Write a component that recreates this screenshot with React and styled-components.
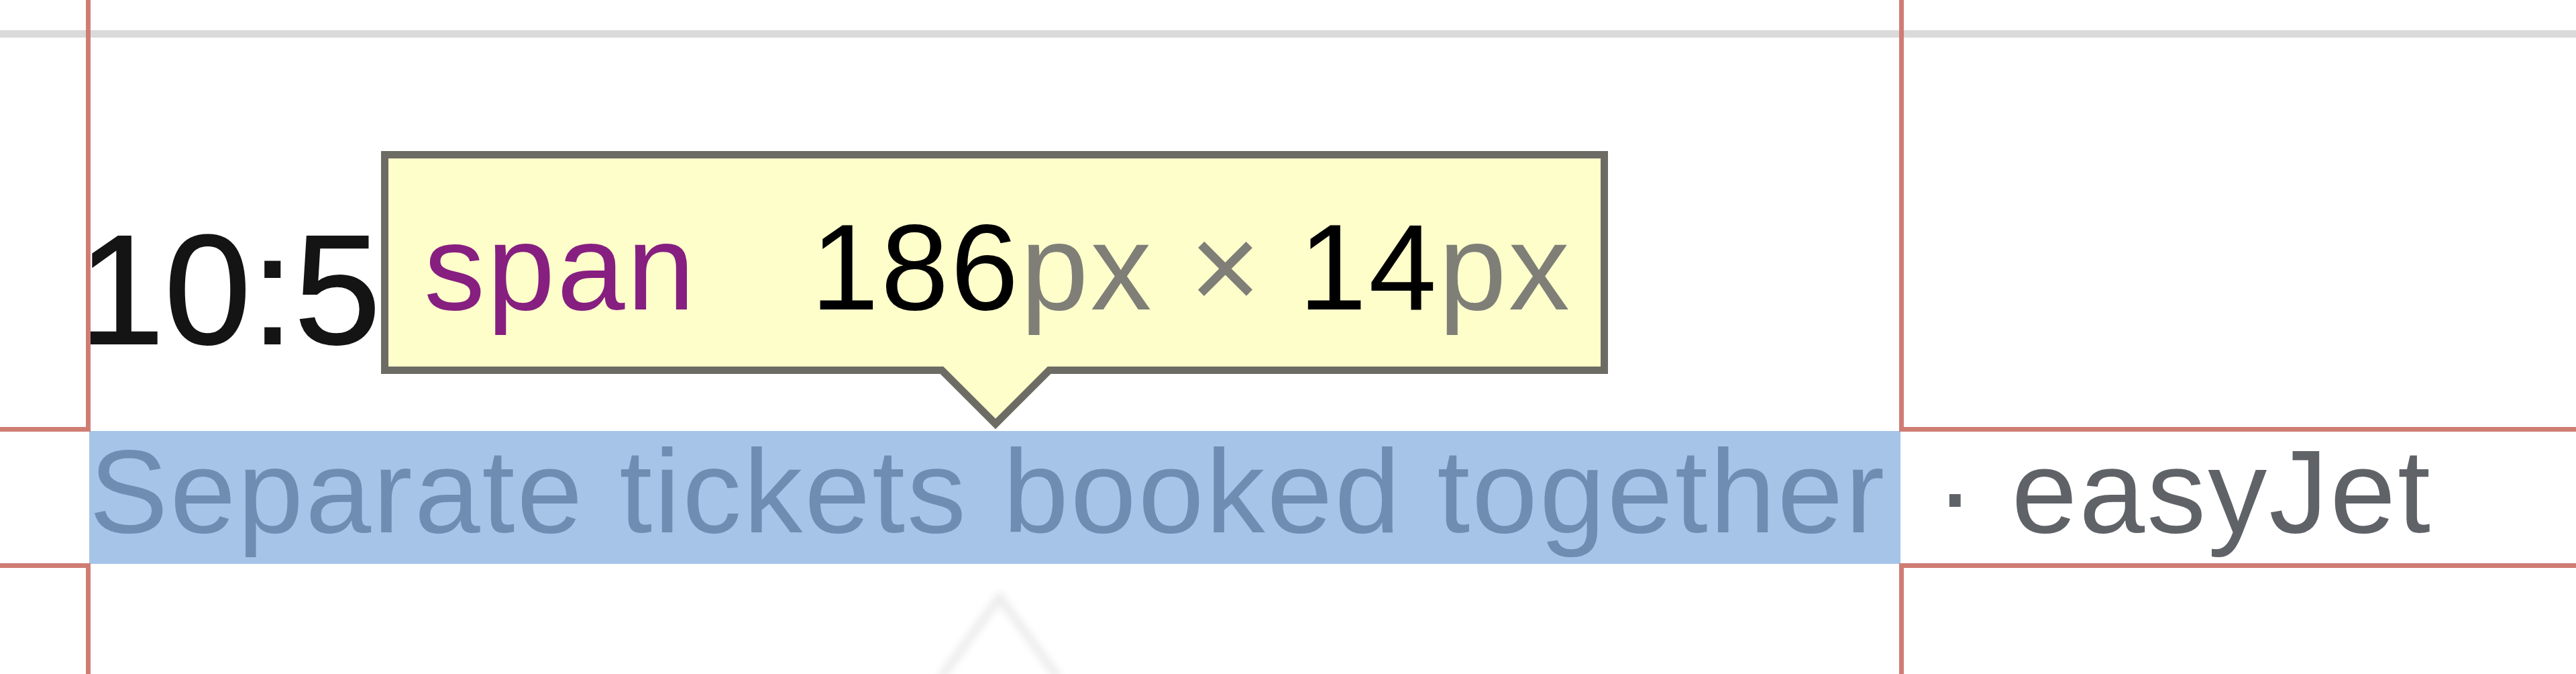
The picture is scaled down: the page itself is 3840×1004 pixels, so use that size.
import React from "react";
import styled, { createGlobalStyle } from "styled-components";

const GlobalStyle = createGlobalStyle`
  html, body {
    margin: 0;
    padding: 0;
    background: #ffffff;
  }
  body {
    font-family: "Liberation Sans", Arial, Helvetica, sans-serif;
  }
`;

const Page = styled.div`
  position: relative;
  width: 3840px;
  height: 1004px;
  overflow: hidden;
  background: #ffffff;
  display: flex;
  flex-direction: column;
`;

const Divider = styled.div`
  flex: none;
  margin-top: 45px;
  height: 11px;
  background: #dadada;
`;

const TimeRow = styled.div`
  flex: none;
  height: 586px;
  box-sizing: border-box;
  padding-left: 116px;
`;

const Time = styled.div`
  display: inline-block;
  margin-top: 260px;
  font-size: 232px;
  line-height: 232px;
  color: #141414;
  white-space: nowrap;
  -webkit-text-stroke: 2px #141414;
`;

const SubRow = styled.div`
  flex: none;
  height: 198px;
  padding-left: 133px;
  font-size: 176px;
  line-height: 180px;
  letter-spacing: 3px;
  white-space: nowrap;
  color: #5f6368;
`;

const Highlighted = styled.span`
  display: inline-block;
  vertical-align: top;
  width: 2700px;
  height: 198px;
  background: #a6c4e8;
  color: #6f8db3;
`;

const Airline = styled.span`
  color: #5f6368;
`;

const Tooltip = styled.div`
  position: absolute;
  left: 568px;
  top: 225px;
  width: 1829px;
  height: 332px;
  box-sizing: border-box;
  border: 11px solid #6c6c64;
  background: #fefecb;
  padding: 72px 0 0 53px;
  font-size: 182px;
  line-height: 180px;
  letter-spacing: 3px;
  white-space: nowrap;
  color: #000000;
`;

const TagName = styled.span`
  color: #861f80;
`;

const Dims = styled.span`
  margin-left: 170px;
  color: #000000;
`;

const Unit = styled.span`
  color: #7f7f78;
`;

const Arrow = styled.svg`
  position: absolute;
  left: 711px;
  top: 294px;
  overflow: visible;
`;

const GhostArrow = styled.svg`
  position: absolute;
  left: 1380px;
  top: 860px;
`;

const Guide = styled.div`
  position: absolute;
  left: ${(p) => p.$x}px;
  top: ${(p) => p.$y}px;
  width: ${(p) => p.$w}px;
  height: ${(p) => p.$h}px;
  background: #cf7d74;
`;

const guides = [
  { x: 128, y: 0, w: 7, h: 643 },
  { x: 128, y: 839, w: 7, h: 165 },
  { x: 2831, y: 0, w: 7, h: 643 },
  { x: 2831, y: 839, w: 7, h: 165 },
  { x: 0, y: 636, w: 135, h: 7 },
  { x: 2831, y: 636, w: 1009, h: 7 },
  { x: 0, y: 839, w: 135, h: 7 },
  { x: 2831, y: 839, w: 1009, h: 7 },
];

export default function App() {
  return (
    <>
      <GlobalStyle />
      <Page>
        <Divider />
        <TimeRow>
          <Time>10:5</Time>
        </TimeRow>
        <SubRow>
          <Highlighted>Separate tickets booked together</Highlighted>
          <Airline>{" · easyJet"}</Airline>
        </SubRow>

        <GhostArrow width="220" height="144" viewBox="0 0 220 144">
          <defs>
            <filter id="ghostBlur" x="-20%" y="-20%" width="140%" height="140%">
              <feGaussianBlur stdDeviation="6" />
            </filter>
          </defs>
          <polyline
            points="22,150 110,30 198,150"
            fill="none"
            stroke="#ebebeb"
            strokeWidth="12"
            filter="url(#ghostBlur)"
          />
        </GhostArrow>

        {guides.map((g, i) => (
          <Guide key={i} $x={g.x} $y={g.y} $w={g.w} $h={g.h} />
        ))}

        <Tooltip>
          <TagName>span</TagName>
          <Dims>
            186<Unit>px</Unit>
            <Unit>{" × "}</Unit>
            14<Unit>px</Unit>
          </Dims>
          <Arrow width="390" height="115" viewBox="0 0 390 115">
            <polygon
              points="10,10 378,10 378,21.5 274,21.5 194,101.5 114,21.5 10,21.5"
              fill="#fefecb"
            />
            <polyline
              points="10,21.5 114,21.5 194,101.5 274,21.5 378,21.5"
              fill="none"
              stroke="#6c6c64"
              strokeWidth="11"
              strokeLinejoin="miter"
            />
          </Arrow>
        </Tooltip>
      </Page>
    </>
  );
}
